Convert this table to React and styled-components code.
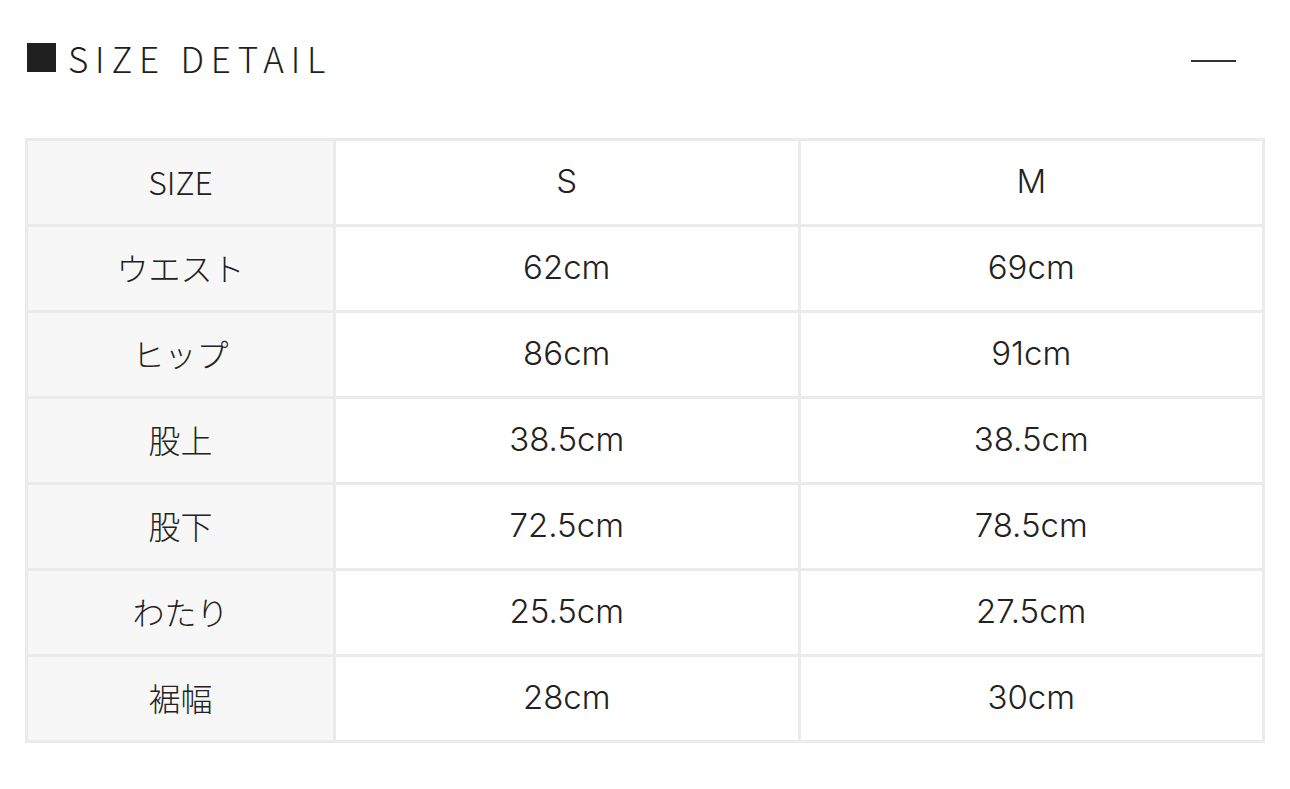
import React from "react";
import styled, { createGlobalStyle } from "styled-components";

const Global = createGlobalStyle`
  html, body { margin: 0; padding: 0; background: #fff; }
  body { font-family: "Inter", "Noto Sans CJK JP", sans-serif; color: #222; }
`;

const Page = styled.div`
  width: 1290px;
  height: 789px;
  box-sizing: border-box;
  padding: 40px 25px 0 25px;
`;

const Header = styled.div`
  display: flex;
  align-items: center;
  justify-content: space-between;
  height: 34px;
`;

const Title = styled.h2`
  margin: 0;
  display: flex;
  align-items: center;
  gap: 12px;
  font-family: "Noto Sans CJK JP", sans-serif;
  font-weight: 300;
  font-size: 35px;
  letter-spacing: 6.8px;
  color: #1e1e1e;
  line-height: 1;
`;

const Square = styled.span`
  display: block;
  width: 29px;
  height: 29px;
  background: #1f1f1f;
  margin-left: 2px;
`;

const Dash = styled.span`
  display: block;
  width: 45px;
  height: 2px;
  background: #333;
  margin-right: 29px;
  margin-top: 8px;
`;

const Table = styled.table`
  margin-top: 64px;
  width: 1240px;
  border-collapse: collapse;
  table-layout: fixed;
  border: 3px solid #ebebeb;
`;

const Cell = styled.td`
  height: ${(p) => (p.$label ? "79px" : "80px")};
  padding: 0 0 ${(p) => (p.$label ? "4px" : "3px")} 0;
  border: 3px solid #ebebeb;
  text-align: center;
  vertical-align: middle;
  background: ${(p) => (p.$label ? "#f7f7f7" : "#fff")};
  font-family: ${(p) =>
    p.$label ? `"Noto Sans CJK JP", sans-serif` : `"Inter", sans-serif`};
  font-size: ${(p) => (p.$label ? "32px" : "33px")};
  font-weight: 300;
  color: #222;
`;

const rows = [
  ["SIZE", "S", "M"],
  ["ウエスト", "62cm", "69cm"],
  ["ヒップ", "86cm", "91cm"],
  ["股上", "38.5cm", "38.5cm"],
  ["股下", "72.5cm", "78.5cm"],
  ["わたり", "25.5cm", "27.5cm"],
  ["裾幅", "28cm", "30cm"],
];

export default function App() {
  return (
    <>
      <Global />
      <Page>
        <Header>
          <Title>
            <Square />
            SIZE DETAIL
          </Title>
          <Dash />
        </Header>
        <Table>
          <colgroup>
            <col style={{ width: "308px" }} />
            <col />
            <col />
          </colgroup>
          <tbody>
            {rows.map((r) => (
              <tr key={r[0]}>
                <Cell $label>{r[0]}</Cell>
                <Cell>{r[1]}</Cell>
                <Cell>{r[2]}</Cell>
              </tr>
            ))}
          </tbody>
        </Table>
      </Page>
    </>
  );
}
